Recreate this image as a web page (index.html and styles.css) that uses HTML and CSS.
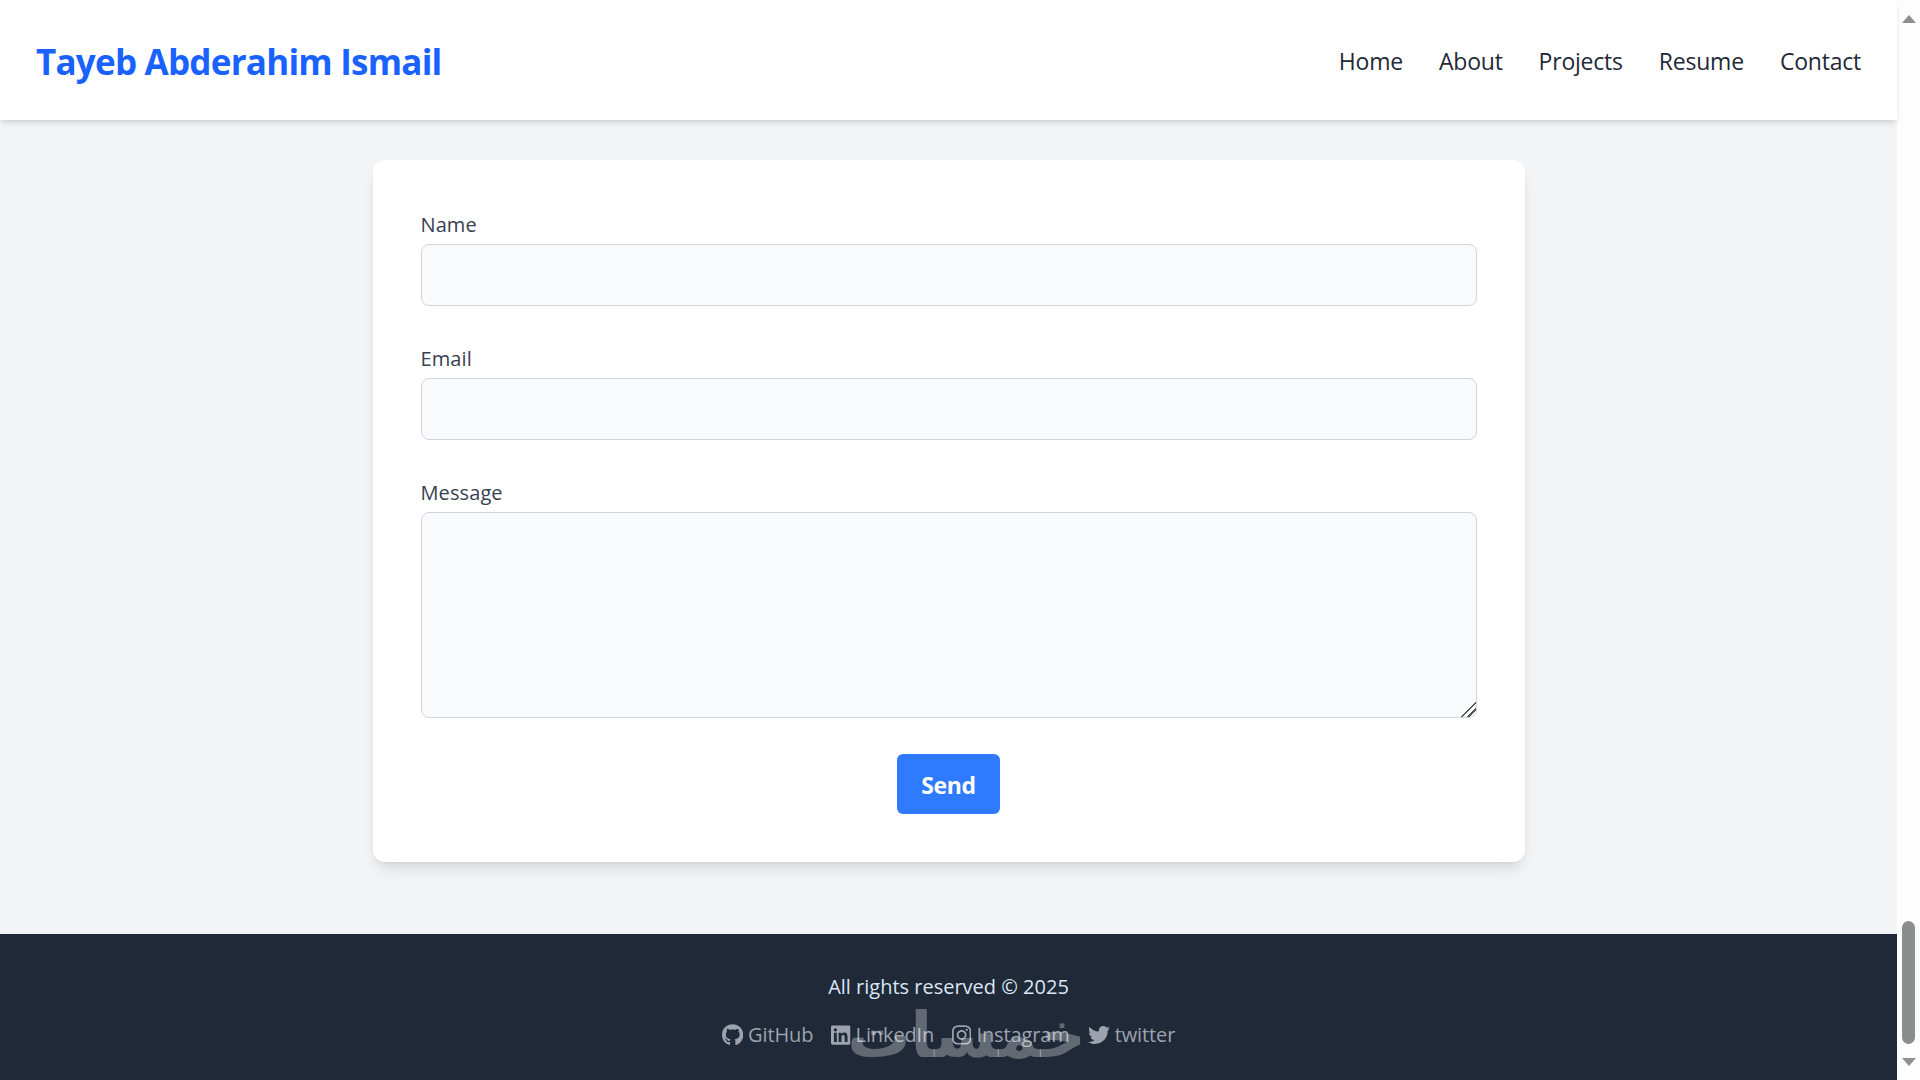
FILE: index.html
```html
<!DOCTYPE html>
<html lang="en">
<head>
  <meta charset="UTF-8">
  <meta name="viewport" content="width=device-width, initial-scale=1.0">
  <title>Tayeb Abderahim Ismail - Contact</title>
  <link rel="stylesheet" href="styles.css">
</head>
<body>
  <div class="page">
    <header class="site-header">
      <a class="brand" href="#">Tayeb Abderahim Ismail</a>
      <nav class="site-nav">
        <a href="#">Home</a>
        <a href="#">About</a>
        <a href="#">Projects</a>
        <a href="#">Resume</a>
        <a href="#">Contact</a>
      </nav>
    </header>
    <main class="content">
      <form class="contact-card">
        <div class="field">
          <label for="name">Name</label>
          <input type="text" id="name">
        </div>
        <div class="field">
          <label for="email">Email</label>
          <input type="email" id="email">
        </div>
        <div class="field">
          <label for="message">Message</label>
          <textarea id="message"></textarea>
        </div>
        <div class="actions">
          <button type="button">Send</button>
        </div>
      </form>
    </main>
    <footer class="site-footer">
      <p class="copyright">All rights reserved © 2025</p>
      <div class="social">
        <a href="#"><svg viewBox="0 0 496 512"><path d="M165.9 397.4c0 2-2.3 3.6-5.2 3.6-3.3 0-5.6-1.6-5.6-3.6 0-2 2.3-3.6 5.2-3.6 3-.3 5.6 1.3 5.6 3.6zm-31.1-4.5c-.7 2 1.3 4.3 4.3 4.9 2.6 1 5.6 0 6.2-2s-1.3-4.3-4.3-5.2c-2.6-.7-5.5.3-6.2 2.3zm44.2-1.7c-2.9.7-4.9 2.6-4.6 4.9.3 2 2.9 3.3 5.9 2.6 2.9-.7 4.9-2.6 4.6-4.6-.3-1.9-3-3.2-5.9-2.9zM244.8 8C106.1 8 0 113.3 0 252c0 110.9 69.8 205.8 169.5 239.2 12.8 2.3 17.3-5.6 17.3-12.1 0-6.2-.3-40.4-.3-61.4 0 0-70 15-84.7-29.8 0 0-11.4-29.1-27.8-36.6 0 0-22.9-15.7 1.6-15.4 0 0 24.9 2 38.6 25.8 21.9 38.6 58.6 27.5 72.9 20.9 2.3-16 8.8-27.1 16-33.7-55.9-6.2-112.3-14.3-112.3-110.5 0-27.5 7.6-41.3 23.6-58.9-2.6-6.5-11.1-33.3 2.6-67.9 20.9-6.5 69 27 69 27 20-5.6 41.5-8.5 62.8-8.5s42.8 2.9 62.8 8.5c0 0 48.1-33.6 69-27 13.7 34.7 5.2 61.4 2.6 67.9 16 17.7 25.8 31.5 25.8 58.9 0 96.5-58.9 104.2-114.8 110.5 9.2 7.9 17 22.9 17 46.4 0 33.7-.3 75.4-.3 83.6 0 6.5 4.6 14.4 17.3 12.1C428.2 457.8 496 362.9 496 252 496 113.3 383.5 8 244.8 8z"/></svg>GitHub</a>
        <a href="#"><svg viewBox="0 0 448 512"><path d="M416 32H31.9C14.3 32 0 46.5 0 64.3v383.4C0 465.5 14.3 480 31.9 480H416c17.6 0 32-14.5 32-32.3V64.3c0-17.8-14.4-32.3-32-32.3zM135.4 416H69V202.2h66.5V416zm-33.2-243c-21.3 0-38.5-17.3-38.5-38.5S80.9 96 102.2 96c21.2 0 38.5 17.3 38.5 38.5 0 21.3-17.2 38.5-38.5 38.5zm282.1 243h-66.4V312c0-24.8-.5-56.7-34.5-56.7-34.6 0-39.9 27-39.9 54.9V416h-66.4V202.2h63.7v29.2h.9c8.9-16.8 30.6-34.5 62.9-34.5 67.2 0 79.7 44.3 79.7 101.9V416z"/></svg>LinkedIn</a>
        <a href="#"><svg viewBox="0 0 448 512"><path d="M224.1 141c-63.6 0-114.9 51.3-114.9 114.9s51.3 114.9 114.9 114.9S339 319.5 339 255.9 287.7 141 224.1 141zm0 189.6c-41.1 0-74.7-33.5-74.7-74.7s33.5-74.7 74.7-74.7 74.7 33.5 74.7 74.7-33.6 74.7-74.7 74.7zm146.4-194.3c0 14.9-12 26.8-26.8 26.8-14.9 0-26.8-12-26.8-26.8s12-26.8 26.8-26.8 26.8 12 26.8 26.8zm76.1 27.2c-1.7-35.9-9.9-67.7-36.2-93.9-26.2-26.2-58-34.4-93.9-36.2-37-2.1-147.9-2.1-184.9 0-35.8 1.7-67.6 9.9-93.9 36.1s-34.4 58-36.2 93.9c-2.1 37-2.1 147.9 0 184.9 1.7 35.9 9.9 67.7 36.2 93.9s58 34.4 93.9 36.2c37 2.1 147.9 2.1 184.9 0 35.9-1.7 67.7-9.9 93.9-36.2 26.2-26.2 34.4-58 36.2-93.9 2.1-37 2.1-147.8 0-184.8zM398.8 388c-7.8 19.6-22.9 34.7-42.6 42.6-29.5 11.7-99.5 9-132.1 9s-102.7 2.6-132.1-9c-19.6-7.8-34.7-22.9-42.6-42.6-11.7-29.5-9-99.5-9-132.1s-2.6-102.7 9-132.1c7.8-19.6 22.9-34.7 42.6-42.6 29.5-11.7 99.5-9 132.1-9s102.7-2.6 132.1 9c19.6 7.8 34.7 22.9 42.6 42.6 11.7 29.5 9 99.5 9 132.1s2.7 102.7-9 132.1z"/></svg>Instagram</a>
        <a href="#"><svg viewBox="0 0 512 512"><path d="M459.37 151.716c.325 4.548.325 9.097.325 13.645 0 138.72-105.583 298.558-298.558 298.558-59.452 0-114.68-17.219-161.137-47.106 8.447.974 16.568 1.299 25.34 1.299 49.055 0 94.213-16.568 130.274-44.832-46.132-.975-84.792-31.188-98.112-72.772 6.498.974 12.995 1.624 19.818 1.624 9.421 0 18.843-1.3 27.614-3.573-48.081-9.747-84.143-51.98-84.143-102.985v-1.299c13.969 7.797 30.214 12.67 47.431 13.319-28.264-18.843-46.781-51.005-46.781-87.391 0-19.492 5.197-37.36 14.294-52.954 51.655 63.675 129.3 105.258 216.365 109.807-1.624-7.797-2.599-15.918-2.599-24.04 0-57.828 46.782-104.934 104.934-104.934 30.213 0 57.502 12.67 76.67 33.137 23.715-4.548 46.456-13.32 66.599-25.34-7.798 24.366-24.366 44.833-46.132 57.827 21.117-2.273 41.584-8.122 60.426-16.243-14.292 20.791-32.161 39.308-52.628 54.253z"/></svg>twitter</a>
      </div>
      <div class="watermark" dir="rtl" lang="ar">خمسات</div>
    </footer>
  </div>
  <div class="scrollbar">
    <svg class="arrow" viewBox="0 0 14 8"><path d="M7 0l7 8H0z"/></svg>
    <div class="thumb"></div>
    <svg class="arrow" viewBox="0 0 14 8"><path d="M0 0h14L7 8z"/></svg>
  </div>
</body>
</html>
```

FILE: styles.css
```css
* {
  box-sizing: border-box;
}
body {
  font-family: "Open Sans", "Noto Sans", Arial, sans-serif;
  background-color: #f3f4f6;
  margin: 0;
  height: 100vh;
  overflow: hidden;
  display: flex;
}
a {
  color: inherit;
  text-decoration: none;
}
.page {
  flex: 1;
  min-width: 0;
  display: flex;
  flex-direction: column;
}
.site-header {
  height: 120px;
  flex-shrink: 0;
  padding: 2px 36px 0 36px;
  background: #fff;
  display: flex;
  align-items: center;
  justify-content: space-between;
  box-shadow: 0 4px 6px -1px rgba(0,0,0,0.1), 0 2px 4px -2px rgba(0,0,0,0.1);
  position: relative;
}
.brand {
  font-size: 35px;
  font-weight: 700;
  color: #1a62ff;
  letter-spacing: -0.77px;
}
.site-nav {
  display: flex;
  gap: 36px;
  font-size: 23px;
  letter-spacing: -0.22px;
  color: #1f2937;
}
.content {
  flex: 1;
  padding-top: 40px;
  display: flex;
  justify-content: center;
  align-items: flex-start;
}
.contact-card {
  width: 1152px;
  padding: 48px;
  background: #fff;
  border-radius: 12px;
  box-shadow: 0 10px 15px -3px rgba(0,0,0,0.1), 0 4px 6px -4px rgba(0,0,0,0.1);
}
.field {
  margin-bottom: 36px;
}
.field label {
  display: block;
  font-size: 20px;
  line-height: 33px;
  font-weight: 500;
  letter-spacing: 0.1px;
  color: #374151;
  margin-bottom: 3px;
}
.field input,
.field textarea {
  display: block;
  width: 100%;
  background: #f9fafb;
  border: 1px solid #d1d5db;
  border-radius: 8px;
  font-size: 20px;
  font-family: inherit;
  padding: 12px 16px;
}
.field input {
  height: 62px;
}
.field textarea {
  height: 206px;
}
.field textarea::-webkit-resizer {
  background: linear-gradient(135deg, transparent 47%, #555 47%, #555 55%, transparent 55%, transparent 70%, #555 70%, #555 78%, transparent 78%);
}
.actions {
  display: flex;
  justify-content: center;
}
.actions button {
  width: 103px;
  height: 60px;
  padding: 2px 0 0;
  border: 0;
  border-radius: 6px;
  background: #2e7bff;
  color: #fff;
  font-family: inherit;
  font-size: 23px;
  font-weight: 700;
  letter-spacing: -0.3px;
  cursor: pointer;
}
.site-footer {
  height: 146px;
  flex-shrink: 0;
  padding-top: 38px;
  background: #1f2937;
  text-align: center;
  position: relative;
}
.copyright {
  margin: 0 0 19px;
  font-size: 20px;
  line-height: 30px;
  letter-spacing: 0;
  color: #dbe6f5;
}
.social {
  display: flex;
  justify-content: center;
  gap: 18px;
  font-size: 20px;
  line-height: 28px;
  letter-spacing: -0.12px;
  color: #9ca3af;
}
.social a {
  display: flex;
  align-items: center;
  gap: 5px;
}
.social svg {
  height: 22px;
  width: auto;
  fill: currentColor;
}
.watermark {
  position: absolute;
  left: 856px;
  top: 57px;
  width: 230px;
  font-family: "DejaVu Sans", sans-serif;
  font-size: 63px;
  font-weight: 700;
  line-height: 90px;
  text-align: center;
  color: rgba(255,255,255,0.3);
  pointer-events: none;
}
.scrollbar {
  width: 23px;
  flex-shrink: 0;
  background: #fdfdfd;
  padding: 15px 0 14px;
  display: flex;
  flex-direction: column;
  align-items: center;
  justify-content: space-between;
}
.arrow {
  width: 14px;
  height: 8px;
  fill: #8e9090;
}
.thumb {
  width: 13px;
  height: 123px;
  margin-top: auto;
  margin-bottom: 14px;
  border-radius: 7px;
  background: #8b8e8e;
}
```
